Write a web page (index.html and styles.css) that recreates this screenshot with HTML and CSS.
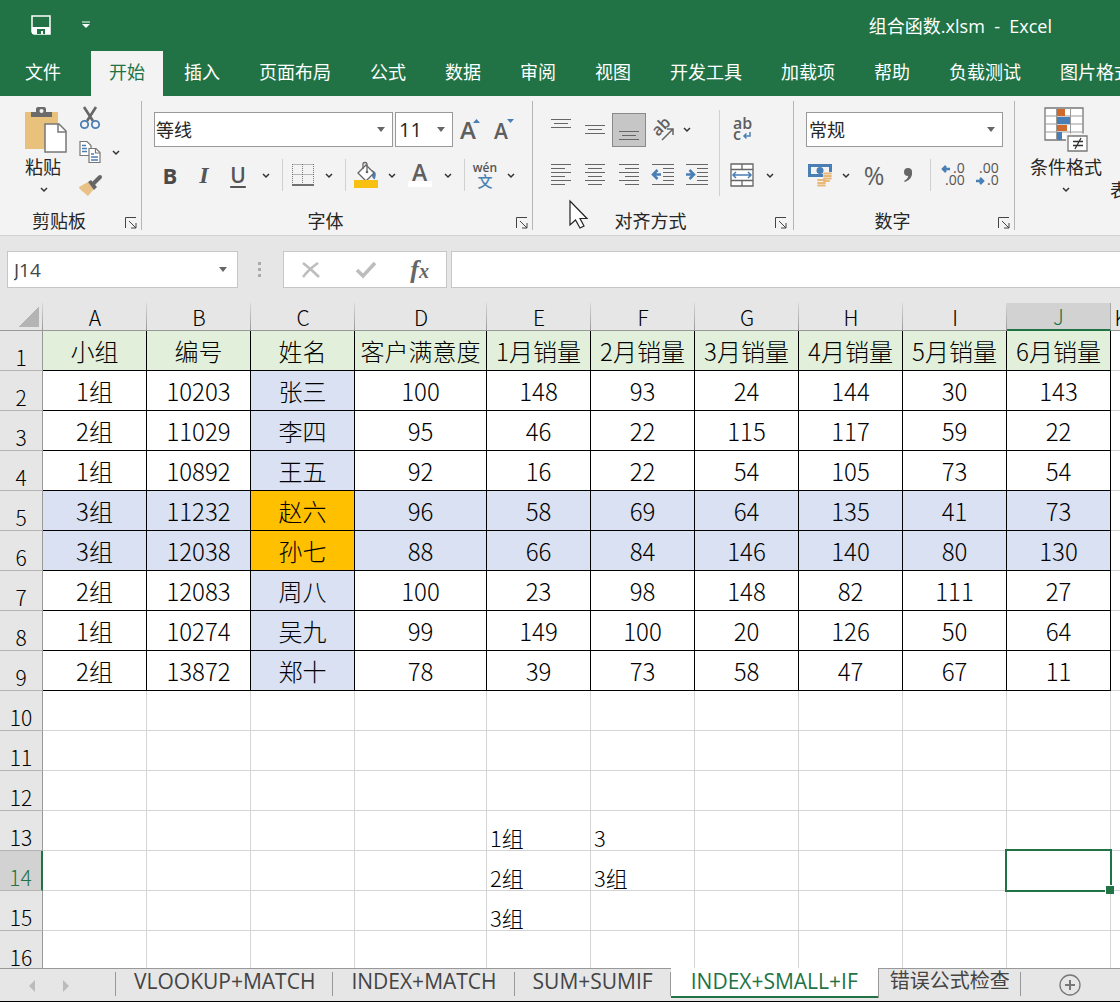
FILE: index.html
```html
<!DOCTYPE html>
<html lang="zh-CN">
<head>
  <meta charset="UTF-8">
  <title>组合函数.xlsm - Excel</title>
  <link rel="stylesheet" href="styles.css">
</head>
<body>
  <header class="titlebar">
    <button class="quick" aria-label="保存">
      <svg width="20" height="20" viewBox="0 0 20 20"><path d="M1 1h18v18H3l-2-2z" fill="none" stroke="#fff" stroke-width="1.500"/><path d="M1 12h18v7H1z" fill="#fff"/><path d="M6 14h8v5h-2v-3h-2v3H6z" fill="#217346"/></svg>
    </button>
    <button class="quick" aria-label="自定义快速访问工具栏">
      <svg width="8" height="8" viewBox="0 0 8 8"><path d="M0 1h8" stroke="#fff"/><path d="M0 3h8L4 7z" fill="#fff"/></svg>
    </button>
    <h1>组合函数.xlsm&nbsp; -&nbsp; Excel</h1>
  </header>

  <nav class="tabs">
    <a href="#" class="file">文件</a>
    <a href="#" class="active">开始</a>
    <a href="#">插入</a>
    <a href="#">页面布局</a>
    <a href="#">公式</a>
    <a href="#">数据</a>
    <a href="#">审阅</a>
    <a href="#">视图</a>
    <a href="#">开发工具</a>
    <a href="#">加载项</a>
    <a href="#">帮助</a>
    <a href="#">负载测试</a>
    <a href="#">图片格式</a>
  </nav>

  <section class="ribbon">
    <div class="group clipboard">
      <div class="tools side">
        <button class="big">
          <svg width="42" height="46" viewBox="0 0 42 46"><path d="M0 5h33v37H0z" fill="#e8c27c"/><path d="M6 10V5h5V2q0-2 2-2h6q2 0 2 2v3h6v5z" fill="#6b6b6b"/><circle cx="16.500" cy="4" r="2" fill="#f3f3f3"/><path d="M20 17h14l7 7v21H20z" fill="#fff" stroke="#777" stroke-width="1.500"/><path d="M33 17v8h8" fill="none" stroke="#777" stroke-width="1.500"/></svg>
          <span>粘贴</span>
          <svg class="chev" width="8" height="5" viewBox="0 0 8 5"><path d="M1 1l3 3 3-3" /></svg>
        </button>
        <div class="stack">
          <div class="line">
            <button class="icon" aria-label="剪切">
              <svg width="22" height="24" viewBox="0 0 22 24"><path d="M5 1l9 14M17 1L8 15" stroke="#666" stroke-width="2.600" fill="none"/><circle cx="5.500" cy="18.500" r="3.700" fill="none" stroke="#4a7fb5" stroke-width="1.800"/><circle cx="16.500" cy="18.500" r="3.700" fill="none" stroke="#4a7fb5" stroke-width="1.800"/></svg>
            </button>
          </div>
          <div class="line">
            <button class="icon" aria-label="复制">
              <svg width="22" height="24" viewBox="0 0 22 24"><g fill="#fff" stroke="#777" stroke-width="1.200"><path d="M1 1.500h7l4 4v10H1z"/><path d="M10 8.500h7l4 4v10H10z"/><path d="M16.500 9v4H21" fill="none"/></g><path d="M3 5.500h4M3 8.500h5M3 11.500h5M12 14h3M12 17h7M12 20h7" stroke="#4a7fb5" stroke-width="1.300"/></svg>
            </button>
            <button class="caret" aria-label="复制选项"><svg class="chev" width="8" height="5" viewBox="0 0 8 5"><path d="M1 1l3 3 3-3"/></svg></button>
          </div>
          <div class="line">
            <button class="icon" aria-label="格式刷">
              <svg width="24" height="22" viewBox="0 0 24 22"><path d="M1 12l9-5 6 7-6 7q-2-1-2-2-2 0-2-2-2 0-3-2-2-1-2-3z" fill="#e8c088"/><path d="M10 7l3-2 6 7-3 3z" fill="#666"/><path d="M16 8l6-6" stroke="#666" stroke-width="4" stroke-linecap="round"/></svg>
            </button>
          </div>
        </div>
      </div>
      <div class="caption"><span>剪贴板</span>
        <button class="launch" aria-label="剪贴板设置"><svg width="12" height="12" viewBox="0 0 12 12"><path d="M.5 11V.5H11M4 4l7 7M11 6v5H6"/></svg></button>
      </div>
    </div>

    <div class="group">
      <div class="tools">
        <div class="row">
          <div class="drop fontname"><select aria-label="字体"><option>等线</option></select></div>
          <div class="drop fontsize"><select aria-label="字号"><option>11</option></select></div>
          <button class="btn" aria-label="增大字号"><svg width="22" height="24" viewBox="0 0 22 24"><text x="1" y="21" class="glyph" font-size="24">A</text><path d="M14 5h7l-3.500-4z" fill="#4a7fb5"/></svg></button>
          <button class="btn" aria-label="减小字号"><svg width="22" height="24" viewBox="0 0 22 24"><text x="1" y="21" class="glyph" font-size="21">A</text><path d="M14 1h7l-3.500 4z" fill="#4a7fb5"/></svg></button>
        </div>
        <div class="row">
          <button class="btn bold">B</button>
          <button class="btn italic">I</button>
          <button class="btn under">U</button>
          <button class="caret" aria-label="下划线选项"><svg class="chev" width="8" height="5" viewBox="0 0 8 5"><path d="M1 1l3 3 3-3"/></svg></button>
          <i class="sep"></i>
          <button class="icon" aria-label="边框"><svg width="22" height="22" viewBox="0 0 22 22"><path d="M.5 .5h21M.5 10.500h21M.5 0v20M10.500 0v20M21.500 0v20" stroke="#777" stroke-dasharray="1 1" fill="none"/><path d="M0 21h22" stroke="#444" stroke-width="1.500"/></svg></button>
          <button class="caret" aria-label="边框选项"><svg class="chev" width="8" height="5" viewBox="0 0 8 5"><path d="M1 1l3 3 3-3"/></svg></button>
          <i class="sep"></i>
          <button class="icon" aria-label="填充颜色"><svg width="24" height="26" viewBox="0 0 24 26"><path d="M17 8q7 1 4 9-2 1-3-3z" fill="#4a7fb5"/><path d="M4 11l8-8 8 8-8 8z" fill="#fff" stroke="#666" stroke-width="1.300"/><path d="M9 7V2q0-1.500 2-1.500t2 1.500v7" fill="none" stroke="#666" stroke-width="1.300"/><circle cx="13" cy="10" r="1.300" fill="#666"/><path d="M0 18h24v8H0z" fill="#f8c010"/></svg></button>
          <button class="caret" aria-label="填充选项"><svg class="chev" width="8" height="5" viewBox="0 0 8 5"><path d="M1 1l3 3 3-3"/></svg></button>
          <button class="btn" aria-label="字体颜色"><svg width="24" height="26" viewBox="0 0 24 26"><path d="M0 19h24v6H0z" fill="#fff"/><text x="4" y="19" class="glyph" font-size="23">A</text></svg></button>
          <button class="caret" aria-label="字体颜色选项"><svg class="chev" width="8" height="5" viewBox="0 0 8 5"><path d="M1 1l3 3 3-3"/></svg></button>
          <i class="sep"></i>
          <button class="icon phonetic"><span>wén</span><b>文</b></button>
          <button class="caret" aria-label="拼音选项"><svg class="chev" width="8" height="5" viewBox="0 0 8 5"><path d="M1 1l3 3 3-3"/></svg></button>
        </div>
      </div>
      <div class="caption"><span>字体</span>
        <button class="launch" aria-label="字体设置"><svg width="12" height="12" viewBox="0 0 12 12"><path d="M.5 11V.5H11M4 4l7 7M11 6v5H6"/></svg></button>
      </div>
    </div>

    <div class="group align">
      <div class="tools side">
        <div class="half">
          <div class="row">
            <button class="btn" aria-label="顶端对齐"><svg class="rules" width="22" height="24" viewBox="0 0 22 24"><path d="M1 1.500h20M4 5.500h14M1 9.500h20"/></svg></button>
            <button class="btn" aria-label="垂直居中"><svg class="rules" width="22" height="24" viewBox="0 0 22 24"><path d="M1 7.500h20M4 11.500h14M1 15.500h20"/></svg></button>
            <button class="btn pressed" aria-label="底端对齐"><svg class="rules" width="22" height="24" viewBox="0 0 22 24"><path d="M1 13.500h20M4 17.500h14M1 21.500h20"/></svg></button>
            <button class="icon" aria-label="方向"><svg width="24" height="24" viewBox="0 0 24 24"><text transform="translate(9 19) rotate(-45)" class="glyph" font-size="16">ab</text><path d="M13 22L24 11M18 11h6v6" fill="none" stroke="#666" stroke-width="1.500"/></svg></button>
            <button class="caret" aria-label="方向选项"><svg class="chev" width="8" height="5" viewBox="0 0 8 5"><path d="M1 1l3 3 3-3"/></svg></button>
          </div>
          <div class="row">
            <button class="btn" aria-label="左对齐"><svg class="rules" width="22" height="24" viewBox="0 0 22 24"><path d="M1 1.500h20M1 5.500h14M1 9.500h20M1 13.500h14M1 17.500h20M1 21.500h14"/></svg></button>
            <button class="btn" aria-label="居中"><svg class="rules" width="22" height="24" viewBox="0 0 22 24"><path d="M1 1.500h20M4 5.500h14M1 9.500h20M4 13.500h14M1 17.500h20M4 21.500h14"/></svg></button>
            <button class="btn" aria-label="右对齐"><svg class="rules" width="22" height="24" viewBox="0 0 22 24"><path d="M1 1.500h20M7 5.500h14M1 9.500h20M7 13.500h14M1 17.500h20M7 21.500h14"/></svg></button>
            <button class="btn" aria-label="减少缩进量"><svg class="rules" width="24" height="24" viewBox="0 0 24 24"><path d="M1 1.500h22M12 5.500h11M12 9.500h11M12 13.500h11M12 17.500h11M1 21.500h22"/><path class="arrow" d="M10 11.500H3M6.500 7l-4.500 4.500 4.500 4.500"/></svg></button>
            <button class="btn" aria-label="增加缩进量"><svg class="rules" width="24" height="24" viewBox="0 0 24 24"><path d="M1 1.500h22M12 5.500h11M12 9.500h11M12 13.500h11M12 17.500h11M1 21.500h22"/><path class="arrow" d="M1 11.500h7M4.500 7L9 11.500 4.500 16"/></svg></button>
          </div>
        </div>
        <i class="sep tall"></i>
        <div class="half">
          <div class="row">
            <button class="btn" aria-label="自动换行"><svg width="20" height="24" viewBox="0 0 20 24"><text x="1" y="11" class="glyph wrap">ab</text><text x="1" y="22" class="glyph wrap">c</text><path d="M18 14v4h-6M14.500 15.500L12 18l2.500 2.500" fill="none" stroke="#4a7fb5" stroke-width="1.500"/></svg></button>
          </div>
          <div class="row">
            <button class="btn" aria-label="合并后居中"><svg width="24" height="24" viewBox="0 0 24 24"><path d="M1 1h22v22H1zM1 6.500h22M1 17.500h22M12 1v5M12 18v5" fill="#fff" stroke="#666" stroke-width="1.300"/><path d="M3 12h18M6 9l-3 3 3 3M18 9l3 3-3 3" fill="none" stroke="#4a7fb5" stroke-width="1.500"/></svg></button>
            <button class="caret" aria-label="合并选项"><svg class="chev" width="8" height="5" viewBox="0 0 8 5"><path d="M1 1l3 3 3-3"/></svg></button>
          </div>
        </div>
      </div>
      <div class="caption"><span>对齐方式</span>
        <button class="launch" aria-label="对齐设置"><svg width="12" height="12" viewBox="0 0 12 12"><path d="M.5 11V.5H11M4 4l7 7M11 6v5H6"/></svg></button>
      </div>
      <svg class="pointer" width="20" height="30" viewBox="0 0 20 30"><path d="M1 1v24l5.500-5 4.500 8 4-2-4-7.500h7z" fill="#fff" stroke="#222" stroke-width="1.200"/></svg>
    </div>

    <div class="group">
      <div class="tools">
        <div class="row">
          <div class="drop format"><select aria-label="数字格式"><option>常规</option></select></div>
        </div>
        <div class="row">
          <button class="icon" aria-label="会计数字格式"><svg width="24" height="24" viewBox="0 0 24 24"><path d="M1.500 2.500h21v10h-21z" fill="#f3f3f3" stroke="#4a7fb5" stroke-width="3"/><path d="M0 1h5L0 6zM24 1h-5l5 5zM0 14h5l-5-5z" fill="#4a7fb5"/><circle cx="12" cy="7.500" r="3.500" fill="#4a7fb5"/><path d="M15 9h9v10h-6v4H9v-8h6z" fill="#f3f3f3"/><path d="M16 10.500h7M16 13h7M16 15.500h7M16 18h5M10 17h7M10 20h7M10 22.500h7" stroke="#e8b878" stroke-width="1.800" stroke-linecap="round"/></svg></button>
          <button class="caret" aria-label="会计格式选项"><svg class="chev" width="8" height="5" viewBox="0 0 8 5"><path d="M1 1l3 3 3-3"/></svg></button>
          <button class="btn percent">%</button>
          <button class="btn" aria-label="千位分隔样式"><svg width="12" height="16" viewBox="0 0 12 16"><circle cx="6" cy="5" r="4" fill="#666"/><path d="M10 4q1 8-7 11l-1-1q5-3 4-6z" fill="#666"/></svg></button>
          <i class="sep"></i>
          <button class="btn" aria-label="增加小数位数"><svg width="24" height="24" viewBox="0 0 24 24"><text x="12" y="10" class="digits">.0</text><text x="4" y="22" class="digits">.00</text><path class="arrow" d="M9 6H2M5 3L2 6l3 3"/></svg></button>
          <button class="btn" aria-label="减少小数位数"><svg width="24" height="24" viewBox="0 0 24 24"><text x="4" y="10" class="digits">.00</text><text x="12" y="22" class="digits">.0</text><path class="arrow" d="M1 18h7M5 15l3 3-3 3"/></svg></button>
        </div>
      </div>
      <div class="caption"><span>数字</span>
        <button class="launch" aria-label="数字设置"><svg width="12" height="12" viewBox="0 0 12 12"><path d="M.5 11V.5H11M4 4l7 7M11 6v5H6"/></svg></button>
      </div>
    </div>

    <div class="group styles">
      <div class="tools side">
        <button class="big">
          <svg width="44" height="46" viewBox="0 0 44 46"><path d="M1 1h38v32H1z" fill="#fff" stroke="#777" stroke-width="1.300"/><path d="M1 9h38M1 17h38M1 25h38M12.500 1v32M26.500 1v32" stroke="#999"/><path d="M13 2h8v7h-8zM13 18h10v6H13z" fill="#cf6a2c"/><path d="M13 10h13v7H13zM13 25h5v8h-5z" fill="#4a7fb5"/><path d="M22 26.500h22V45H22z" fill="#f3f3f3"/><path d="M24 29h19v15H24z" fill="#fff" stroke="#777" stroke-width="1.300"/><path d="M29 34.500h10M29 38.500h10M37 31l-6 11" stroke="#333" stroke-width="1.300"/></svg>
          <span>条件格式</span>
          <svg class="chev" width="8" height="5" viewBox="0 0 8 5"><path d="M1 1l3 3 3-3"/></svg>
        </button>
        <button class="big last"><span>表格格式</span></button>
      </div>
    </div>
  </section>

  <section class="formula">
    <div class="drop namebox"><input type="text" value="J14" aria-label="名称框"></div>
    <svg class="dots" width="4" height="16" viewBox="0 0 4 16"><path d="M0 0h3v3H0zM0 6h3v3H0zM0 12h3v3H0z" fill="#aaa"/></svg>
    <div class="entry">
      <button aria-label="取消"><svg width="20" height="18" viewBox="0 0 20 18"><path d="M2 2q8 6 16 14M17 2Q8 8 2 16" fill="none" stroke="#bdbdbd" stroke-width="2.600"/></svg></button>
      <button aria-label="输入"><svg width="20" height="18" viewBox="0 0 20 18"><path d="M1 9l6 6L19 2" fill="none" stroke="#bdbdbd" stroke-width="3.600"/></svg></button>
      <button class="fx" aria-label="插入函数">f<small>x</small></button>
    </div>
    <input class="bar" type="text" aria-label="编辑栏">
  </section>

  <main class="sheet">
    <table>
      <colgroup><col class="rowcol"><col><col><col><col class="wide"><col><col><col><col><col><col><col class="cut"></colgroup>
      <thead>
        <tr><th class="corner"></th><th>A</th><th>B</th><th>C</th><th>D</th><th>E</th><th>F</th><th>G</th><th>H</th><th>I</th><th class="current">J</th><th>K</th></tr>
      </thead>
      <tbody class="data">
        <tr class="titles"><th>1</th><td>小组</td><td>编号</td><td>姓名</td><td>客户满意度</td><td>1月销量</td><td>2月销量</td><td>3月销量</td><td>4月销量</td><td>5月销量</td><td>6月销量</td><td></td></tr>
        <tr><th>2</th><td>1组</td><td>10203</td><td>张三</td><td>100</td><td>148</td><td>93</td><td>24</td><td>144</td><td>30</td><td>143</td><td></td></tr>
        <tr><th>3</th><td>2组</td><td>11029</td><td>李四</td><td>95</td><td>46</td><td>22</td><td>115</td><td>117</td><td>59</td><td>22</td><td></td></tr>
        <tr><th>4</th><td>1组</td><td>10892</td><td>王五</td><td>92</td><td>16</td><td>22</td><td>54</td><td>105</td><td>73</td><td>54</td><td></td></tr>
        <tr class="match"><th>5</th><td>3组</td><td>11232</td><td>赵六</td><td>96</td><td>58</td><td>69</td><td>64</td><td>135</td><td>41</td><td>73</td><td></td></tr>
        <tr class="match"><th>6</th><td>3组</td><td>12038</td><td>孙七</td><td>88</td><td>66</td><td>84</td><td>146</td><td>140</td><td>80</td><td>130</td><td></td></tr>
        <tr><th>7</th><td>2组</td><td>12083</td><td>周八</td><td>100</td><td>23</td><td>98</td><td>148</td><td>82</td><td>111</td><td>27</td><td></td></tr>
        <tr><th>8</th><td>1组</td><td>10274</td><td>吴九</td><td>99</td><td>149</td><td>100</td><td>20</td><td>126</td><td>50</td><td>64</td><td></td></tr>
        <tr><th>9</th><td>2组</td><td>13872</td><td>郑十</td><td>78</td><td>39</td><td>73</td><td>58</td><td>47</td><td>67</td><td>11</td><td></td></tr>
      </tbody>
      <tbody class="free">
        <tr><th>10</th><td></td><td></td><td></td><td></td><td></td><td></td><td></td><td></td><td></td><td></td><td></td></tr>
        <tr><th>11</th><td></td><td></td><td></td><td></td><td></td><td></td><td></td><td></td><td></td><td></td><td></td></tr>
        <tr><th>12</th><td></td><td></td><td></td><td></td><td></td><td></td><td></td><td></td><td></td><td></td><td></td></tr>
        <tr><th>13</th><td></td><td></td><td></td><td></td><td>1组</td><td>3</td><td></td><td></td><td></td><td></td><td></td></tr>
        <tr><th class="current">14</th><td></td><td></td><td></td><td></td><td>2组</td><td>3组</td><td></td><td></td><td></td><td class="selected"></td><td></td></tr>
        <tr><th>15</th><td></td><td></td><td></td><td></td><td>3组</td><td></td><td></td><td></td><td></td><td></td><td></td></tr>
        <tr><th>16</th><td></td><td></td><td></td><td></td><td></td><td></td><td></td><td></td><td></td><td></td><td></td></tr>
      </tbody>
    </table>
  </main>

  <footer class="sheets">
    <div class="nav">
      <button aria-label="上一张"><svg width="8" height="12" viewBox="0 0 8 12"><path d="M7 0v12L1 6z" fill="#bbb"/></svg></button>
      <button aria-label="下一张"><svg width="8" height="12" viewBox="0 0 8 12"><path d="M1 0v12l6-6z" fill="#bbb"/></svg></button>
    </div>
    <a href="#">VLOOKUP+MATCH</a>
    <a href="#">INDEX+MATCH</a>
    <a href="#">SUM+SUMIF</a>
    <a href="#" class="active">INDEX+SMALL+IF</a>
    <a href="#" class="cjk">错误公式检查</a>
    <button class="add" aria-label="新工作表"><svg width="22" height="22" viewBox="0 0 22 22"><circle cx="11" cy="11" r="10" fill="none" stroke="#777" stroke-width="1.300"/><path d="M6 11h10M11 6v10" stroke="#777" stroke-width="2"/></svg></button>
  </footer>
</body>
</html>
```
FILE: styles.css
```css
*{box-sizing:border-box}
body{margin:0;height:100vh;display:flex;flex-direction:column;overflow:hidden;background:#e6e6e6;color:#262626;font-family:"Open Sans","Noto Sans CJK SC",sans-serif;font-size:18px}
button,input,select{font:inherit;color:inherit;margin:0;padding:0;border:0;background:none;border-radius:0}
button{display:flex;align-items:center;justify-content:center;flex:none}
a{color:inherit;text-decoration:none}
svg{display:block;flex:none;overflow:visible}

.titlebar{flex:none;height:51px;display:flex;align-items:center;background:#217346;color:#fff;padding:0 68px 2px 31px}
.titlebar h1{margin:0 0 0 auto;font-size:18px;font-weight:400}
.quick{margin-right:31px}

.tabs{flex:none;height:45px;display:flex;gap:3px;background:#217346;color:#fff;padding-left:7px;white-space:nowrap;overflow:hidden}
.tabs a{flex:none;padding:0 18px;line-height:43px}
.tabs .file{margin-right:9px}
.tabs .active{background:#f3f3f3;color:#217346}

.ribbon{flex:none;height:140px;display:flex;background:#f3f3f3;border-bottom:1px solid #d2d2d2;padding:5px 0;overflow:hidden}
.group{flex:none;display:flex;flex-direction:column;border-right:1px solid #b5b5b5;padding:0 10px 0 11px;position:relative}
.tools{flex:1}
.side{display:flex}
.row{display:flex;align-items:center;height:34px}
.row:first-child{height:57px}
.caption{display:flex;align-items:center;height:18px;margin-right:-6px}
.caption span{flex:1;text-align:center;margin-left:-11px;line-height:18px}
.caption .launch{margin:4px 0 0 7px}
.launch path{fill:none;stroke:#444}
.btn{width:34px;height:34px}
.icon{width:30px;height:34px}
.caret{width:22px;height:34px}
.chev path{fill:none;stroke:#333;stroke-width:1.5}
.sep{flex:none;width:11px;height:32px;background:linear-gradient(#d0d0d0,#d0d0d0) center/1px 100% no-repeat}
.sep.tall{height:86px;margin-top:9px}
.pressed{background:#c6c6c6;border:1px solid #8a8a8a}
.rules path{fill:none;stroke:#666}
.arrow,.rules .arrow{fill:none;stroke:#4a7fb5;stroke-width:2.5}
.glyph{font-weight:600;fill:#5e5e5e}
.wrap{font-size:16px}
.digits{font-size:14px;fill:#555}
.bold{font-weight:700;font-size:22px;color:#4a4a4a}
.italic{font-family:"Liberation Serif",serif;font-style:italic;font-weight:700;font-size:24px;color:#555}
.under{font-weight:600;font-size:21px;color:#555;text-decoration:underline;text-underline-offset:3px}
.percent{font-size:25px;color:#5e5e5e}
.phonetic{flex-direction:column;color:#555;font-size:12px;font-weight:600}
.phonetic span{line-height:12px}
.phonetic b{font-size:15px;line-height:15px;font-weight:500;color:#4a7fb5}

.drop{position:relative;display:flex;flex:none;height:35px;background:#fff;border:1px solid #999}
.drop select,.drop input{flex:1;width:100%;appearance:none;padding-left:1px;outline:0}
.drop::after{content:"";position:absolute;right:7px;top:14px;border:4px solid transparent;border-top:5px solid #666;border-bottom:0;pointer-events:none}
.fontname{width:239px;margin:0 2px 0 1px}
.fontsize{width:58px}
.fontsize select{font-size:20px;padding-left:3px}
.format{width:197px;margin-left:1px}
.format select{padding-left:2px}

.clipboard{width:142px}
.clipboard .tools{margin-left:-11px;padding-left:20px}
.big{flex-direction:column;justify-content:flex-start;padding-top:6px}
.big span{line-height:24px;margin-top:2px}
.big .chev{margin-top:8px}
.clipboard .big{align-items:flex-start;width:50px;padding-left:5px}
.clipboard .big .chev{margin-left:15px}
.stack{padding-left:5px}
.line{display:flex;align-items:center;height:34px}
.align{padding-right:12px}
.styles{border:0;padding-left:15px}
.styles .last{margin-left:8px;padding-top:75px}
.pointer{position:absolute;left:36px;top:99px}

.formula{flex:none;height:67px;display:flex;align-items:center;padding-left:7px;color:#444}
.formula .drop,.entry,.bar{height:37px;background:#fff;border:1px solid #c6c6c6}
.namebox{width:231px}
.drop.namebox input{padding-left:6px;font-size:19px}
.namebox::after{right:10px;top:15px}
.dots{margin:0 21px 0 20px}
.entry{flex:none;width:164px;display:flex;justify-content:space-between;padding:0 17px}
.fx{font-family:"Liberation Serif",serif;font-style:italic;font-weight:700;font-size:26px;color:#666}
.fx small{font-size:20px;padding-top:4px}
.bar{flex:1;margin-left:4px;border-right:0;padding-left:8px}

.sheet{flex:1;min-height:0;overflow:hidden;background:#fff}
table{table-layout:fixed;width:1131px;border-collapse:separate;border-spacing:0;font-family:"Noto Sans CJK SC",sans-serif;font-weight:300;color:#000}
col{width:104px}
.rowcol{width:43px}
.wide{width:132px}
.cut{width:20px}
th,td{padding:0;height:40px;white-space:nowrap;line-height:30px}
th{font-weight:300;font-size:21px;background:#e6e6e6}
thead th{height:28px;line-height:26px;border-bottom:1px solid #999;background:linear-gradient(#d8d8d8,#999) right/1px 100% no-repeat #e6e6e6}
thead .corner{background:linear-gradient(135deg,transparent 50%,#b4b4b4 50%) 19px 4px/20px 20px no-repeat,linear-gradient(#d8d8d8,#999) right/1px 100% no-repeat #e6e6e6}
thead .current{background:#d2d2d2;border-bottom:2px solid #217346;color:#217346;border-right:1px solid #aaa}
tbody th{vertical-align:bottom;line-height:26px;border-right:1px solid #999;border-bottom:1px solid #b5b5b5}
tbody .current{background:#d2d2d2;color:#217346;border-right:2px solid #217346}
td{border-right:1px solid #d4d4d4;border-bottom:1px solid #d4d4d4;text-align:center;font-size:24px}
.data td:not(:last-child){border-color:#000}
.data td:nth-child(4){background:#d9e1f2}
.data .titles td:not(:last-child){background:#e2efda}
.match td:not(:last-child){background:#d9e1f2}
.data .match td:nth-child(4){background:#ffc000}
.free td{text-align:left;vertical-align:bottom;font-size:22px;line-height:26px;padding-left:3px}
.selected{position:relative}
.selected::before{content:"";position:absolute;inset:-2px;border:2px solid #217346}
.selected::after{content:"";position:absolute;right:-4px;bottom:-4px;width:8px;height:8px;background:#217346;border:solid #fff;border-width:1px 0 0 1px}

.sheets{flex:none;height:34px;display:flex;background:#e6e6e6;border-top:1px solid #999;border-bottom:1px solid #000;padding-bottom:3px;font-size:21px;color:#444}
.nav{width:116px;display:flex;gap:26px;padding:4px 0 0 28px;background:linear-gradient(#999,#999) right/1px 24px no-repeat}
.sheets a{line-height:24px;padding:0 18px;background:linear-gradient(#999,#999) right/1px 24px no-repeat}
.sheets .active{background:#fff;color:#217346;border-right:1px solid #999;box-shadow:inset 0 -2px #217346;margin-top:-1px;padding:1px 20px 0}
.sheets .cjk{font-size:20px;padding:0 11px}
.add{margin:5px 0 0 38px;align-self:flex-start}
```
